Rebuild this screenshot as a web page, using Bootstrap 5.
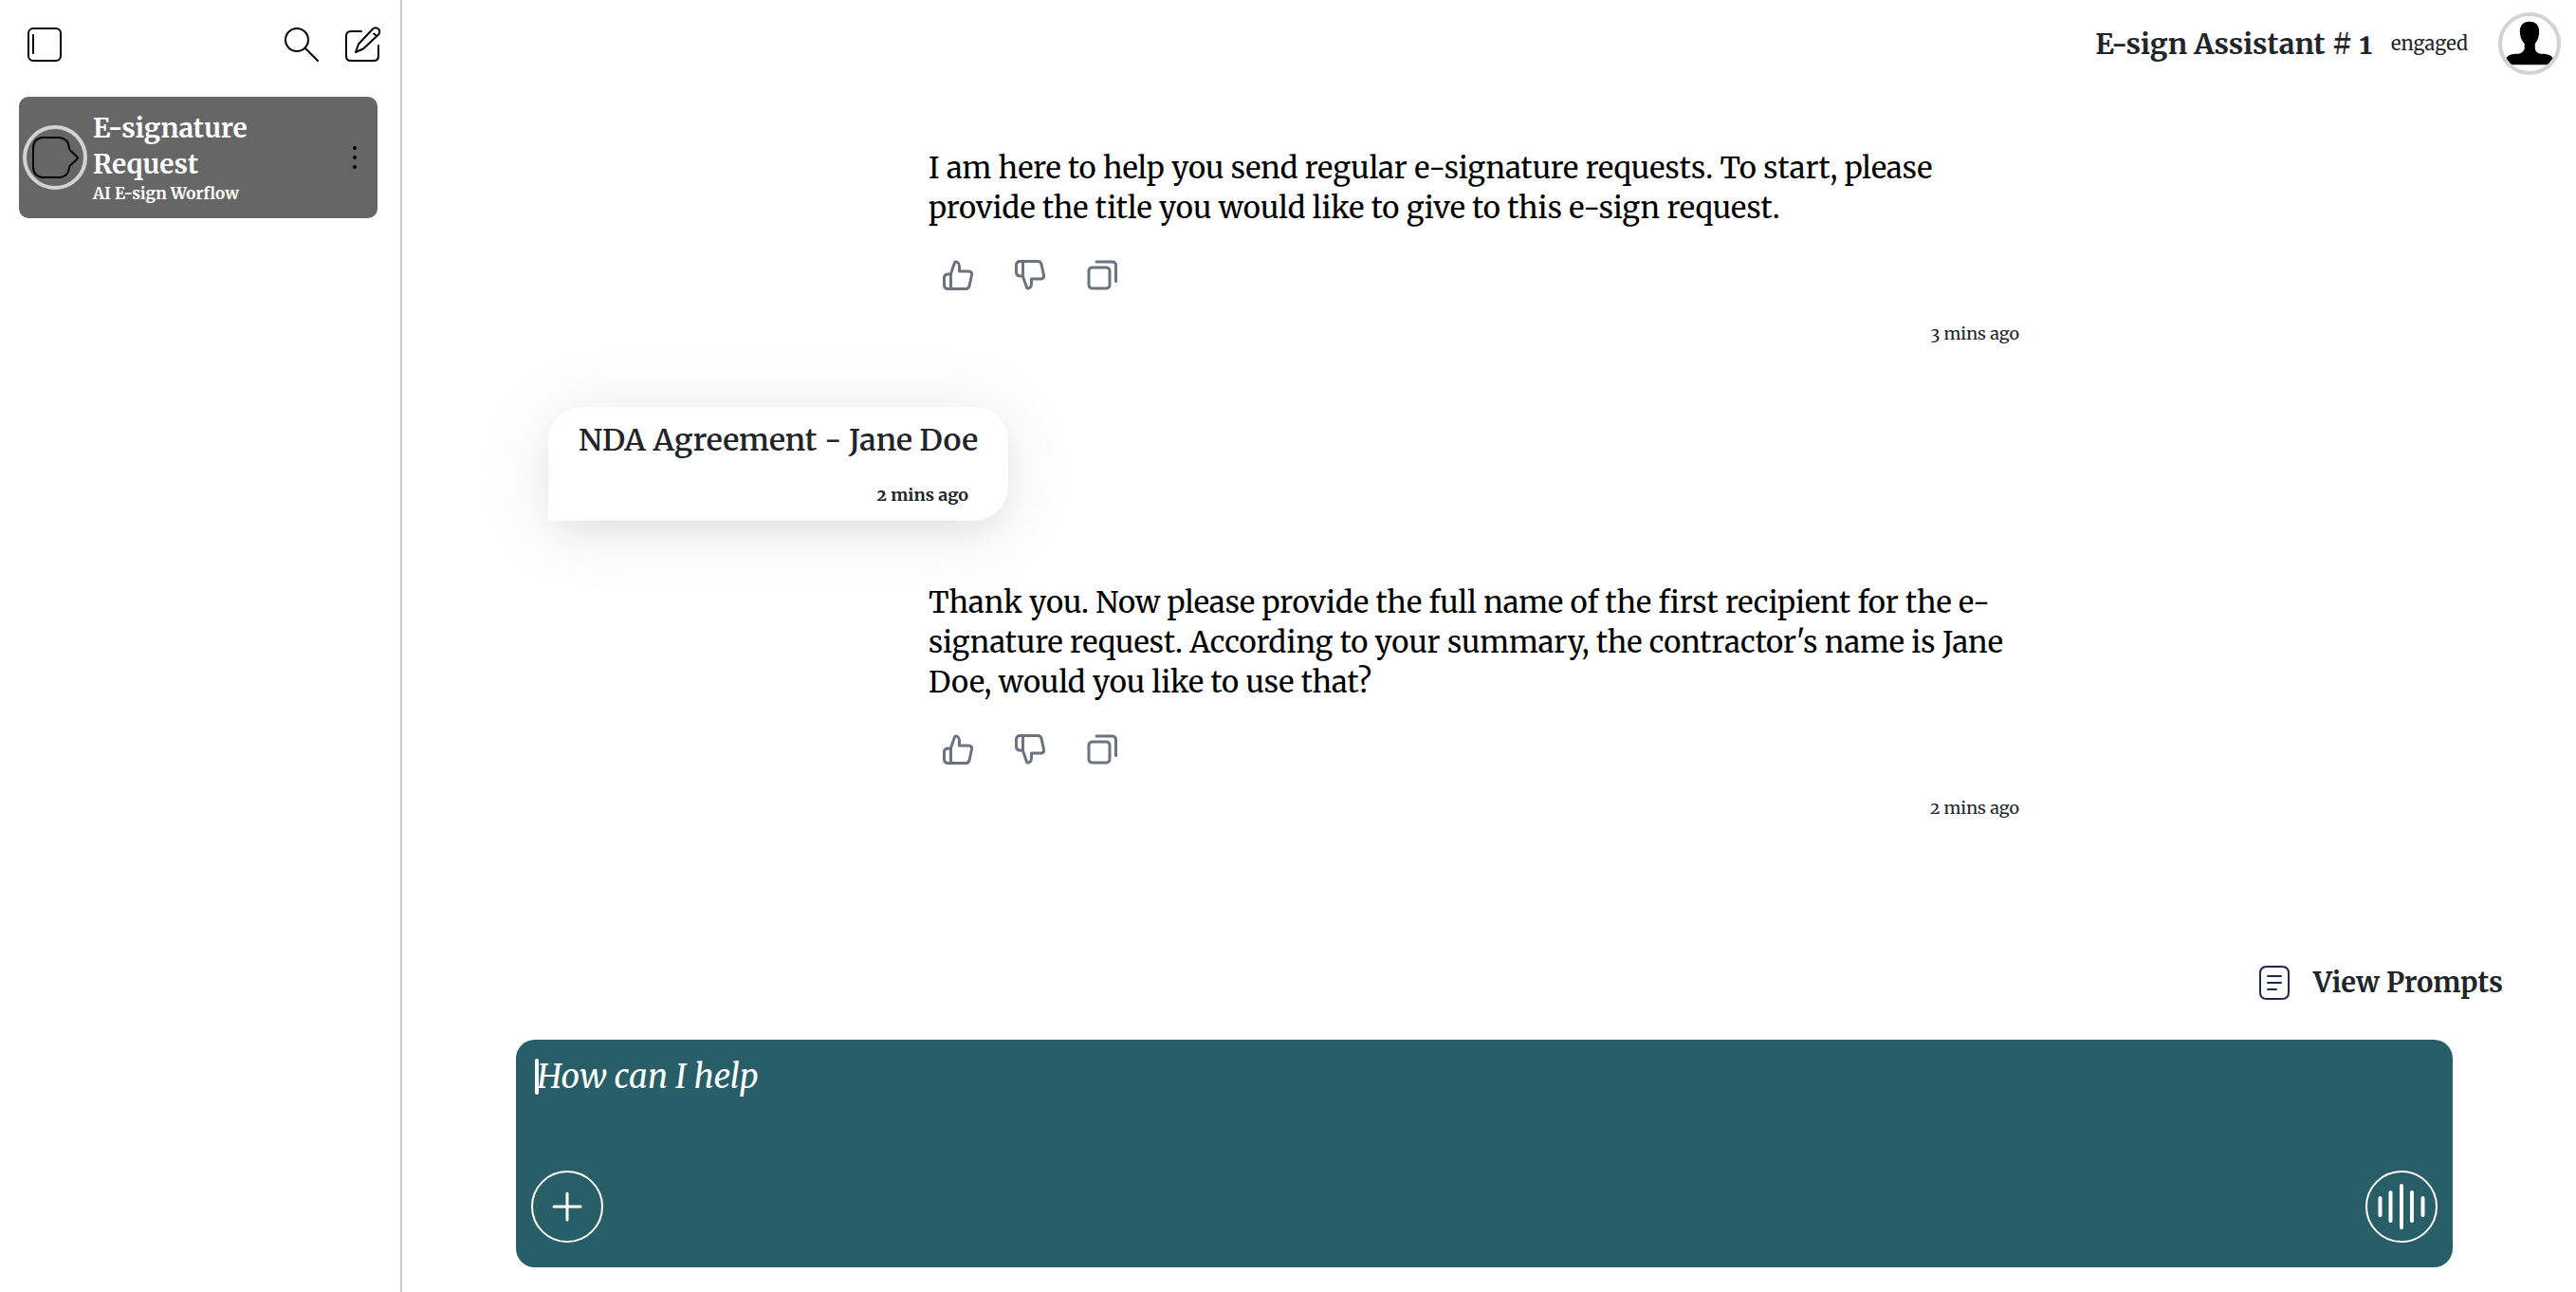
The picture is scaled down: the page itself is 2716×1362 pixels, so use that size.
<!DOCTYPE html>
<html lang="en">
<head>
<meta charset="utf-8">
<meta name="viewport" content="width=device-width, initial-scale=1">
<title>E-sign Assistant</title>
<link href="https://cdn.jsdelivr.net/npm/bootstrap@5.3.0/dist/css/bootstrap.min.css" rel="stylesheet">
<style>
body{font-family:Merriweather,"Noto Serif","DejaVu Serif Condensed","Liberation Serif",serif;font-variant-numeric:oldstyle-nums;color:#212529;background:#fff}
svg{display:block;flex:none}
.side-panel{width:424px;border-right:2px solid #ccc;padding:28px 24px 28px 20px}
.icon-btn{padding:0;border:0;background:none;color:#000}
.side-tools{padding-left:8px;margin-right:-5px;height:38px}
.chat-item{margin-top:36px;min-height:128px;border-radius:10px;background:#666;color:#fff;padding:0 16px 0 4px}
.ring{width:68px;height:68px;border:4px solid #d3d3d3;border-radius:50%;overflow:hidden;flex:none}
.ring-user{width:66px;height:66px}
.chat-label{padding-left:6px}
.chat-name{font-size:28px;line-height:38px}
.chat-sub{font-size:17px;line-height:24px}
.top-bar{height:92px;padding-right:16px}
.bar-title{font-size:30px;line-height:40px}
.note-lg{font-size:20px;line-height:30px;margin:0 32px 0 20px}
.thread{padding:64px 120px 0}
.reply{margin-left:435px;width:1150px}
.reply p{font-size:31px;line-height:42px;color:#000;margin:0}
.reply-actions{gap:44px;padding:34px 15px 0;color:#6b7280}
.reply-actions .icon-btn{color:inherit}
.stamp{font-size:18px;line-height:28px}
.reply .stamp{margin-top:32px}
.bubble{width:fit-content;margin:63px 34px 65px;padding:14px 32px 13px;border-radius:36px 36px 36px 0;background:#fff;box-shadow:0 8px 76px rgba(0,0,0,.1),0 16px 32px -8px rgba(0,0,0,.06)}
.bubble-text{font-size:32px;line-height:42px;font-weight:600}
.bubble .stamp{margin:23px 10px 0 0}
.composer-area{padding:0 130px 26px 120px}
.prompts-btn{gap:24px;margin-right:-53px;margin-bottom:40px;color:#212529}
.prompts-label{font-size:29px;line-height:40px}
.composer{height:240px;border-radius:20px;background:#275e67;padding:16px 16px 26px}
.composer textarea{resize:none;border:0;outline:0;background:none;color:#fff;font-size:35px;line-height:46px;font-style:italic;padding:0 0 0 6px;height:88px;width:100%}
.composer textarea::placeholder{color:#fff;opacity:1}
.caret-bar{left:4px;top:4px;width:4px;height:38px;border-radius:2px;background:#fff}
.round-btn{width:76px;height:76px;border:2px solid #fff;border-radius:50%;background:none;color:#fff;padding:0}
</style>
</head>
<body>
<svg width="0" height="0" class="position-absolute" aria-hidden="true">
<symbol id="i-up" viewBox="0 0 32 32"><path d="M8.500 30V14.500L12.500 3Q13.500 1.300 15.500 2.500Q17.500 3.700 17.500 6.500V12H27.500Q31 12.500 30.600 15.500L28 27.500Q27 30.500 24.500 30.500H5Q1.500 30 1.500 26.500V19Q1.500 15.500 5 15H8.500"/></symbol>
<symbol id="i-copy" viewBox="0 0 32 32"><rect x="2" y="8" width="22" height="22" rx="3.500"/><path d="M10 2H26.500Q30.500 2 30.500 6V22.500"/></symbol>
</svg>
<div class="d-flex min-vh-100">
  <aside class="side-panel flex-shrink-0">
    <div class="side-tools d-flex align-items-center">
      <button class="icon-btn me-auto" aria-label="Toggle sidebar"><svg width="38" height="38" viewBox="0 0 38 38" fill="none" stroke="#000" stroke-width="2" stroke-linecap="round"><rect x="2" y="2" width="34" height="34" rx="5"/><path d="M7 9V28"/></svg></button>
      <button class="icon-btn" aria-label="Search"><svg width="38" height="38" viewBox="0 0 38 38" fill="none" stroke="#000" stroke-width="2" stroke-linecap="round"><circle cx="14" cy="14" r="12"/><path d="M23 23L36 36"/></svg></button>
      <button class="icon-btn ms-4" aria-label="New chat"><svg width="42" height="38" viewBox="0 0 42 38" fill="none" stroke="#000" stroke-width="2" stroke-linecap="round" stroke-linejoin="round"><path d="M20 5H9Q4 5 4 10V31Q4 36 9 36H33Q38 36 38 31V20"/><path d="M32 2.500Q35 0 38 2.500Q40.500 5.500 38 8.500L22 23.500L14 27L17 18.500Z M33 7.500L35 9"/></svg></button>
    </div>
    <div class="chat-item d-flex align-items-center">
      <div class="ring"><svg width="60" height="60" viewBox="0 0 60 60" fill="none" stroke="#000" stroke-width="2"><path d="M17 9H35Q44 10 45 20Q45 22 47 23.500L53 29Q54.500 30.500 53 32L47 37.500Q45 39 45 41Q44 50 35 51H17Q7 50 7 40V20Q7 10 17 9Z"/></svg></div>
      <div class="chat-label flex-grow-1">
        <div class="chat-name fw-bold">E-signature<br>Request</div>
        <div class="chat-sub fw-bold">AI E-sign Worflow</div>
      </div>
      <button class="icon-btn" aria-label="Chat options"><svg width="16" height="26" viewBox="0 0 16 26"><circle cx="8" cy="3" r="2"/><circle cx="8" cy="13" r="2"/><circle cx="8" cy="23" r="2"/></svg></button>
    </div>
  </aside>
  <main class="flex-grow-1 d-flex flex-column">
    <header class="top-bar d-flex align-items-center justify-content-end">
      <span class="bar-title fw-bold">E-sign Assistant # 1</span>
      <span class="note-lg">engaged</span>
      <div class="ring ring-user"><svg width="58" height="58" viewBox="0 0 60 60"><path d="M30 6C37 6 41 10.500 40.500 18Q40 25 36 30V36Q37 40 42 41H46Q55 42 56 47L50 53H9L4 47Q5 42 14 41H18Q23 40 24.500 36V30Q20 25 19.500 18C19 10.500 23 6 30 6Z"/></svg></div>
    </header>
    <section class="thread flex-grow-1">
      <article class="reply">
        <p>I am here to help you send regular e-signature requests. To start, please<br>provide the title you would like to give to this e-sign request.</p>
        <div class="reply-actions d-flex">
          <button class="icon-btn" aria-label="Good reply"><svg width="32" height="32" fill="none" stroke="currentColor" stroke-width="3" stroke-linejoin="round"><use href="#i-up"/></svg></button>
          <button class="icon-btn" aria-label="Bad reply"><svg width="32" height="32" fill="none" stroke="currentColor" stroke-width="3" stroke-linejoin="round"><g transform="translate(0 32) scale(1 -1)"><use href="#i-up"/></g></svg></button>
          <button class="icon-btn" aria-label="Copy reply"><svg width="32" height="32" fill="none" stroke="currentColor" stroke-width="3" stroke-linecap="round"><use href="#i-copy"/></svg></button>
        </div>
        <div class="stamp text-end">3 mins ago</div>
      </article>
      <article class="bubble">
        <div class="bubble-text">NDA Agreement - Jane Doe</div>
        <div class="stamp fw-bold text-end">2 mins ago</div>
      </article>
      <article class="reply">
        <p>Thank you. Now please provide the full name of the first recipient for the e-<br>signature request. According to your summary, the contractor's name is Jane<br>Doe, would you like to use that?</p>
        <div class="reply-actions d-flex">
          <button class="icon-btn" aria-label="Good reply"><svg width="32" height="32" fill="none" stroke="currentColor" stroke-width="3" stroke-linejoin="round"><use href="#i-up"/></svg></button>
          <button class="icon-btn" aria-label="Bad reply"><svg width="32" height="32" fill="none" stroke="currentColor" stroke-width="3" stroke-linejoin="round"><g transform="translate(0 32) scale(1 -1)"><use href="#i-up"/></g></svg></button>
          <button class="icon-btn" aria-label="Copy reply"><svg width="32" height="32" fill="none" stroke="currentColor" stroke-width="3" stroke-linecap="round"><use href="#i-copy"/></svg></button>
        </div>
        <div class="stamp text-end">2 mins ago</div>
      </article>
    </section>
    <div class="composer-area">
      <div class="d-flex justify-content-end">
        <button class="icon-btn prompts-btn d-flex align-items-center"><svg width="34" height="38" viewBox="0 0 34 38" fill="none" stroke="#1f2850" stroke-width="2" stroke-linecap="round"><path d="M9 2H25Q32 2 32 9V29Q32 36 25 36H9Q2 36 2 29V9Q2 2 9 2ZM10 12H24M10 19H24M10 26H19"/></svg><span class="prompts-label fw-bold">View Prompts</span></button>
      </div>
      <form class="composer d-flex flex-column">
        <div class="position-relative">
          <textarea aria-label="Message" placeholder="How can I help"></textarea>
          <span class="caret-bar position-absolute"></span>
        </div>
        <div class="d-flex justify-content-between mt-auto">
          <button type="button" class="round-btn d-flex align-items-center justify-content-center" aria-label="Add"><svg width="32" height="32" viewBox="0 0 32 32" stroke="#fff" stroke-width="3" stroke-linecap="round"><path d="M16 2V30M2 16H30"/></svg></button>
          <button type="button" class="round-btn d-flex align-items-center justify-content-center" aria-label="Voice input"><svg width="50" height="48" viewBox="0 0 50 48" stroke="#fff" stroke-width="4" stroke-linecap="round"><path d="M2.500 15V33M13.500 9V39M25 2V46M36 9V39M47.500 15V33"/></svg></button>
        </div>
      </form>
    </div>
  </main>
</div>
<script src="https://cdn.jsdelivr.net/npm/bootstrap@5.3.0/dist/js/bootstrap.bundle.min.js"></script>
</body>
</html>
